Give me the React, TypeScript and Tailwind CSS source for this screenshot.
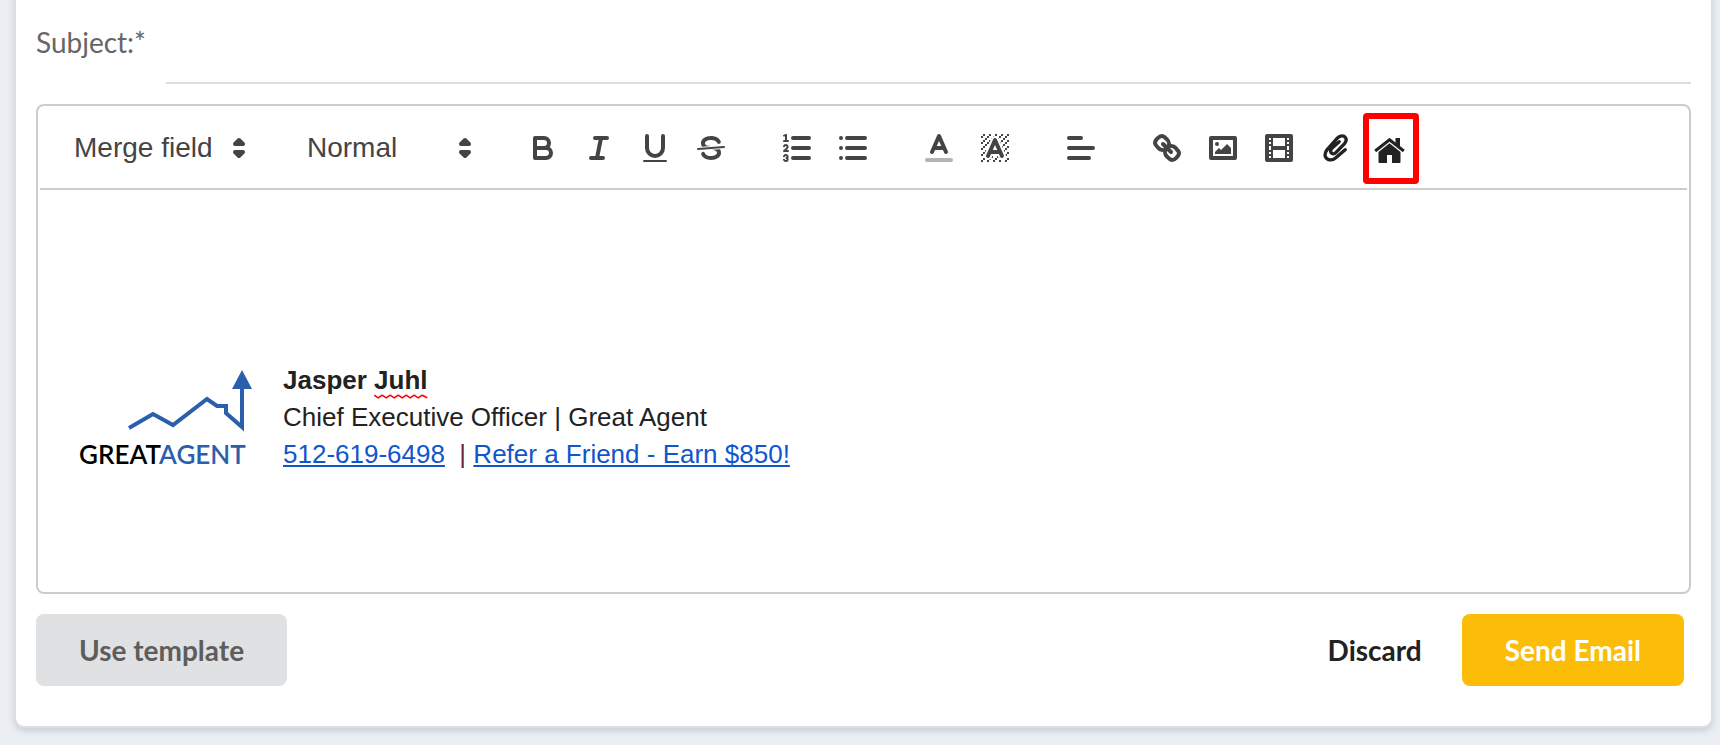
import React from 'react';

const SortArrows = () => (
    <svg viewBox="0 0 18 18" className="w-9 h-9 fill-[#444] stroke-[#444] stroke-2" strokeLinejoin="round" strokeLinecap="round">
        <polygon points="7 11 9 13 11 11 7 11" />
        <polygon points="7 7 9 5 11 7 7 7" />
    </svg>
);

// single-unit dots of the hatched "background color" icon
const HATCH = [
    [4, 4], [2, 6], [3, 5], [4, 7], [2, 12], [2, 9], [2, 15], [3, 8], [12, 2], [11, 3], [2, 3], [6, 2], [3, 2], [5, 3], [9, 2],
    [15, 14], [13, 7], [15, 5], [14, 6], [15, 8], [14, 9], [14, 3], [15, 2], [12, 5], [13, 4], [9, 14], [8, 15], [5, 15], [11, 15], [14, 15], [15, 11],
];

const fill = 'fill-[#444] stroke-none';

const GROUPS = [
    [
        {
            label: 'Bold',
            icon: (
                <>
                    <path d="M5,4H9.5A2.5,2.5,0,0,1,12,6.5v0A2.5,2.5,0,0,1,9.5,9H5V4Z" />
                    <path d="M5,9h5.5A2.5,2.5,0,0,1,13,11.5v0A2.5,2.5,0,0,1,10.5,14H5V9Z" />
                </>
            ),
        },
        { label: 'Italic', icon: <path d="M7,4H13M5,14H11M8,14L10,4" /> },
        {
            label: 'Underline',
            icon: (
                <>
                    <path d="M5,3V9a4.012,4.012,0,0,0,4,4H9a4.012,4.012,0,0,0,4-4V3" />
                    <rect className={fill} height="1" rx="0.5" ry="0.5" width="12" x="3" y="15" />
                </>
            ),
        },
        {
            label: 'Strikethrough',
            icon: (
                <>
                    <path strokeWidth="1" d="M15.5,8.5L2.5,9.5" />
                    <path className={fill} d="M9.007,8C6.542,7.791,6,7.519,6,6.5,6,5.792,7.283,5,9,5c1.571,0,2.765.679,2.969,1.309a1,1,0,0,0,1.9-.617C13.356,4.106,11.354,3,9,3,6.2,3,4,4.538,4,6.5a3.2,3.2,0,0,0,.5,1.843Z" />
                    <path className={fill} d="M8.984,10C11.457,10.208,12,10.479,12,11.5c0,.708-1.283,1.5-3,1.5-1.571,0-2.765-.679-2.969-1.309a1,1,0,1,0-1.9.617C4.644,13.894,6.646,15,9,15c2.8,0,5-1.538,5-3.5a3.2,3.2,0,0,0-.5-1.843Z" />
                </>
            ),
        },
    ],
    [
        {
            label: 'Numbered list',
            icon: (
                <>
                    <path d="M7,4H15M7,9H15M7,14H15" />
                    <path strokeWidth="1" d="M2.5,5.5H4.5" />
                    <path className={fill} d="M3.5,6A0.5,0.5,0,0,1,3,5.5V3.085l-0.276.138A0.5,0.5,0,0,1,2.053,3c-0.124-.247-0.023-0.324.224-0.447l1-.5A0.5,0.5,0,0,1,4,2.5v3A0.5,0.5,0,0,1,3.5,6Z" />
                    <path strokeWidth="1" d="M4.5,10.5h-2c0-.234,1.85-1.076,1.85-2.234A0.959,0.959,0,0,0,2.5,8.156" />
                    <path strokeWidth="1" d="M2.5,14.846a0.959,0.959,0,0,0,1.85-.109A0.7,0.7,0,0,0,3.75,14a0.688,0.688,0,0,0,.6-0.736,0.959,0.959,0,0,0-1.85-.109" />
                </>
            ),
        },
        { label: 'Bullet list', icon: <path d="M6,4H15M6,9H15M6,14H15M3,4H3M3,9H3M3,14H3" /> },
    ],
    [
        {
            label: 'Text color',
            icon: (
                <>
                    <path opacity="0.4" d="M3,15H15" />
                    <path d="M5.5,11L9,3L12.5,11M11.63,9H6.38" />
                </>
            ),
        },
        {
            label: 'Background color',
            icon: (
                <>
                    <g className={fill}>
                        {HATCH.map(([x, y]) => (
                            <rect key={`${x}-${y}`} x={x} y={y} width="1" height="1" />
                        ))}
                        <polygon points="6 6.868 6 6 5 6 5 7 5.942 7 6 6.868" />
                        <polygon points="6.817 5 6 5 6 6 6.38 6 6.817 5" />
                        <polygon points="4 11.439 4 11 3 11 3 12 3.755 12 4 11.439" />
                        <polygon points="4.63 10 4 10 4 11 4.192 11 4.63 10" />
                        <path d="M10.832,4.2L11,4.582V4H10.708A1.948,1.948,0,0,1,10.832,4.2Z" />
                        <path d="M7,4.582L7.168,4.2A1.929,1.929,0,0,1,7.292,4H7V4.582Z" />
                        <path d="M8,13H7.683l-0.351.8a1.933,1.933,0,0,1-.124.2H8V13Z" />
                        <path d="M9,3H8V3.282A1.985,1.985,0,0,1,9,3Z" />
                        <polygon points="13.447 10.174 13.808 11 14 11 14 10 13.37 10 13.447 10.174" />
                        <path d="M3.775,14H3v1H4V14.314A1.97,1.97,0,0,1,3.775,14Z" />
                        <polygon points="12 6.868 12 6 11.62 6 12 6.868" />
                        <polygon points="12.933 9 13 9 13 8 12.495 8 12.933 9" />
                        <path d="M6,14.926V15H7V14.316A1.993,1.993,0,0,1,6,14.926Z" />
                        <path d="M10.668,13.8L10.317,13H10v1h0.792A1.947,1.947,0,0,1,10.668,13.8Z" />
                        <path d="M14.332,12.2a1.99,1.99,0,0,1,.166.8H15V12H14.245Z" />
                    </g>
                    <path d="M5.5,13L9,5L12.5,13M11.63,11H6.38" />
                </>
            ),
        },
    ],
    [{ label: 'Align', icon: <path d="M3,9H15M3,14H13M3,4H9" /> }],
    [
        {
            label: 'Insert link',
            icon: (
                <>
                    <path d="M7,7L11,11" />
                    <path d="M8.9,4.577a3.476,3.476,0,0,1,.36,4.679A3.476,3.476,0,0,1,4.577,8.9C3.185,7.5,2.035,6.4,4.217,4.217S7.5,3.185,8.9,4.577Z" />
                    <path d="M13.423,9.1a3.476,3.476,0,0,0-4.679-.36,3.476,3.476,0,0,0,.36,4.679c1.392,1.392,2.5,2.542,4.679.36S14.815,10.5,13.423,9.1Z" />
                </>
            ),
        },
        {
            label: 'Insert image',
            icon: (
                <>
                    <rect height="10" width="12" x="3" y="4" />
                    <circle className={fill} cx="6" cy="7" r="1" />
                    <polygon className={fill} points="5 12 5 11 7 9 8 10 11 7 13 9 13 12 5 12" />
                </>
            ),
        },
        {
            label: 'Insert video',
            icon: (
                <>
                    <rect height="12" width="12" x="3" y="3" />
                    <path className={fill} d="M5,3h1v12h-1zM12,3h1v12h-1zM5,8h8v2h-8zM3,5h3v1h-3zM3,7h3v1h-3zM3,10h3v1h-3zM3,12h3v1h-3zM12,5h3v1h-3zM12,7h3v1h-3zM12,10h3v1h-3zM12,12h3v1h-3z" />
                </>
            ),
        },
    ],
];

const Paperclip = () => (
    <svg viewBox="0 0 74 84" className="w-[25px] h-7" fill="none" stroke="#222" strokeWidth="10" strokeLinecap="round">
        <path d="M66,47L37,72C27,81,12,79,7,69C4,61,6,54,12,47L43,12C51,4,62,4,67,11C71,17,69,23,64,29L38,56C33,61,27,60,24,56C21,52,23,46,27,42L48,23" />
    </svg>
);

const House = () => (
    <svg viewBox="0 0 31 25" className="w-[31px] h-[25px]" fill="#222">
        <path d="M1.2,13L15.5,1.7L29.8,13" fill="none" stroke="#222" strokeWidth="3" />
        <path d="M21.5,0H26V10L21.5,6.5Z" />
        <path d="M15.5,5.3L26.5,14V24Q26.5,25,25.5,25H18V17H13V25H5.5Q4.5,25,4.5,24V14Z" />
    </svg>
);

const Squiggle = () => (
    <svg viewBox="0 0 53 5" className="absolute bottom-0 left-0 h-[5px] w-full" fill="none" stroke="#f00" strokeWidth="1.6" strokeLinejoin="round">
        <path d="M0,1.2L4,3.8L8,1.2L12,3.8L16,1.2L20,3.8L24,1.2L28,3.8L32,1.2L36,3.8L40,1.2L44,3.8L48,1.2L53,3.8" />
    </svg>
);

const Logo = () => (
    <svg viewBox="0 0 174 100" className="mt-2 w-[174px] h-[100px] shrink-0" role="img" aria-label="Great Agent">
        <path d="M50,58L74,44L94,55L128,29L138,36H147V43L163,57V18" fill="none" stroke="#2b5fad" strokeWidth="4" />
        <path d="M163,0L173,19H153Z" fill="#2b5fad" />
        <text x="0" y="94" fontSize="26" fontWeight="600" fontFamily="Lato, sans-serif" fill="#000">
            GREAT<tspan fill="#2b5fad">AGENT</tspan>
        </text>
    </svg>
);

const Toolbar = () => (
    <div role="toolbar" aria-label="Formatting" className="mx-[2px] flex h-[84px] items-center border-b-2 border-[#ccc] pt-[2px] pl-[34px] font-['Liberation_Sans',sans-serif] text-[28px] text-[#444]">
        <div className="relative mr-[50px] flex w-[183px] items-center">
            <select aria-label="Merge field" className="w-full appearance-none bg-transparent outline-none">
                <option>Merge field</option>
            </select>
            <div className="pointer-events-none absolute right-0">
                <SortArrows />
            </div>
        </div>
        <div className="relative mr-8 flex w-44 items-center">
            <select aria-label="Text style" className="w-full appearance-none bg-transparent outline-none">
                <option>Normal</option>
                <option>Heading 1</option>
                <option>Heading 2</option>
            </select>
            <div className="pointer-events-none absolute right-0">
                <SortArrows />
            </div>
        </div>
        <div className="flex gap-[30px]">
            {GROUPS.map((group, index) => (
                <div key={index} className="flex">
                    {group.map((item) => (
                        <button key={item.label} type="button" aria-label={item.label} className="flex w-14 h-12 items-center justify-center">
                            <svg viewBox="0 0 18 18" className="w-9 h-9" fill="none" stroke="#444" strokeWidth="2" strokeLinecap="round" strokeLinejoin="round">
                                {item.icon}
                            </svg>
                        </button>
                    ))}
                </div>
            ))}
        </div>
        <button type="button" aria-label="Attach file" className="flex w-14 h-12 items-center justify-center">
            <Paperclip />
        </button>
        <button type="button" aria-label="Insert listing" className="relative flex w-14 h-12 items-center justify-center pt-1 pr-1">
            <House />
            {/* Highlight frame */}
            <span className="absolute inset-x-0 -top-[11px] -bottom-3 rounded-sm border-[6px] border-[#f00]" />
        </button>
    </div>
);

const App = () => {
    return (
        <div className="overflow-hidden bg-[#ebeff4] pr-[9px] pb-[19px] pl-4 font-[Lato,sans-serif] text-[28px]">
            <main className="-mt-4 rounded-lg bg-white px-5 pt-9 pb-10 shadow-[0_0_0_2px_#dcdee1,0_3px_6px_2px_#c8ced6]">
                <div className="flex h-16 items-start">
                    <label htmlFor="subject" className="w-[130px] shrink-0 leading-[44px] text-[#666]">
                        Subject:*
                    </label>
                    <input id="subject" type="text" className="h-16 min-w-0 flex-1 border-b-2 border-[#ddd] text-[#222] outline-none" />
                </div>

                <section className="mt-5 rounded-lg border-2 border-[#ccc]">
                    <Toolbar />
                    <div className="flex h-[402px] items-start pt-[172px] pl-[41px] font-['Liberation_Sans',sans-serif] text-[26px] leading-[37px] text-[#222]">
                        <Logo />
                        <div className="ml-[30px]">
                            <p className="font-bold">
                                Jasper{' '}
                                <span className="relative inline-block">
                                    Juhl
                                    <Squiggle />
                                </span>
                            </p>
                            <p>Chief Executive Officer | Great Agent</p>
                            <p className="whitespace-pre text-[#741b47]">
                                <a href="tel:5126196498" className="text-[#1155cc] underline">512-619-6498</a>
                                {'  | '}
                                <a href="#refer" className="text-[#1155cc] underline">Refer a Friend - Earn $850!</a>
                            </p>
                        </div>
                    </div>
                </section>

                <div className="mt-5 flex items-center justify-between pr-[7px] font-bold">
                    <button type="button" className="h-[72px] rounded-lg bg-[#e0e1e2] px-[43px] text-[#5d5d5d]">
                        Use template
                    </button>
                    <div className="flex items-center">
                        <button type="button" className="h-[72px] px-10 text-[#222]">Discard</button>
                        <button type="button" className="h-[72px] rounded-lg bg-[#fbbd08] px-[43px] text-white">
                            Send Email
                        </button>
                    </div>
                </div>
            </main>
        </div>
    );
};

export default App;
